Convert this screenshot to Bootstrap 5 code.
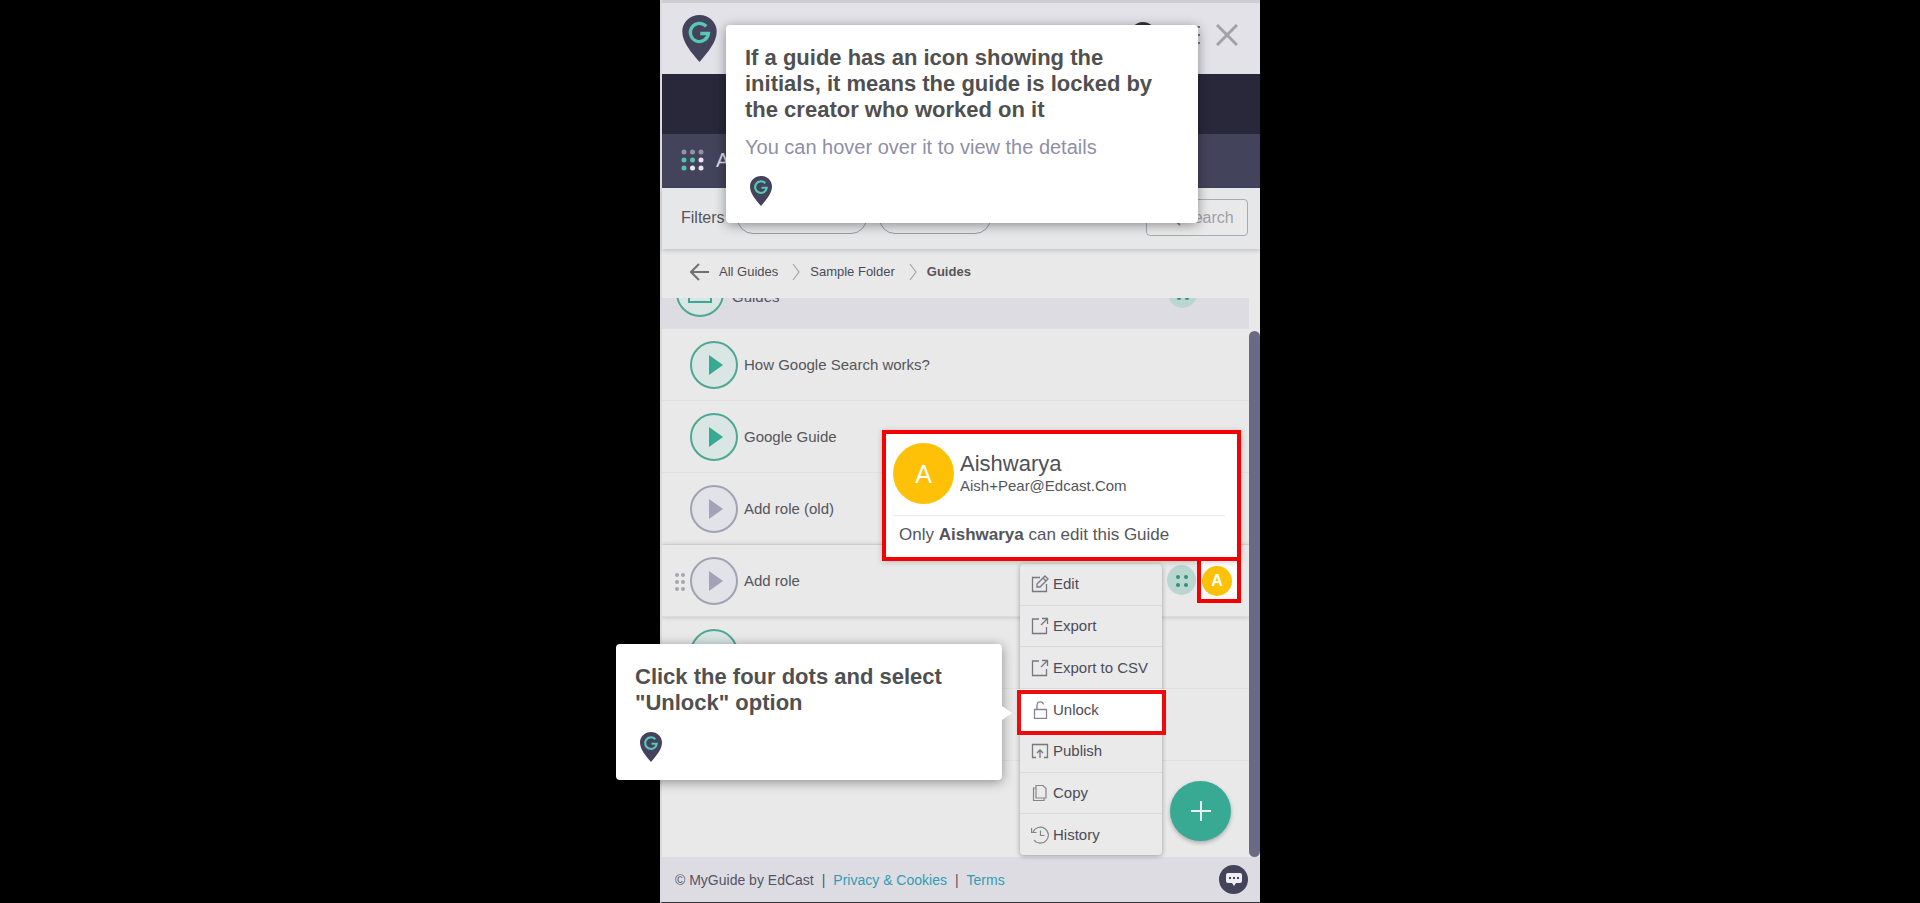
<!DOCTYPE html>
<html lang="en">
<head>
<meta charset="utf-8">
<meta name="viewport" content="width=device-width, initial-scale=1">
<title>MyGuide – unlock a guide</title>
<link href="https://cdn.jsdelivr.net/npm/bootstrap@5.3.0/dist/css/bootstrap.min.css" rel="stylesheet">
<style>
  body { background: #000; font-family: "Liberation Sans", Arial, sans-serif; font-size: 16px; line-height: 20px; color: #55555c; }
  button { font-family: inherit; color: inherit; }
  .panel { max-width: 600px; min-height: 100vh; background: #e9e9e9; border-left: 2px solid #dadada; border-bottom: 1px solid #33333b; }
  .top-bar { height: 74px; background: #e3e2e8; border-top: 3px solid #cdccd1; padding: 0 22px 0 20px; }
  .brand-band { height: 60px; background: #28283a; }
  .app-bar { height: 54px; background: #44435c; color: #dcdce4; padding: 0 0 2px 19px; }
  .filter-bar { height: 61px; background: #e6e7e9; padding: 0 12px 2px 19px; box-shadow: 0 2px 4px #00000026; z-index: 1; }
  .chip { height: 32px; border: 1px solid #9a9aa2; border-radius: 16px; background: transparent; font-size: 14px; color: #777; }
  .chip-a { width: 130px; } .chip-b { width: 112px; }
  .search-box { width: 102px; height: 37px; border: 1px solid #aaaab4; border-radius: 4px; background: #e9e9ea; padding: 0 6px 0 36px; font-size: 16px; }
  .search-box::placeholder { color: #9f9fa9; }
  .search-wrap svg { left: 18px; top: 10px; }
  .crumbs { height: 49px; padding: 0 0 3px 28px; font-size: 13px; line-height: 16px; gap: 10px; }
  .crumbs a { color: #4b4b57; text-decoration: none; }
  .list-area { overflow: hidden; padding-right: 11px; font-size: 15px; }
  .rows { margin: -41px 0 0; }
  .guide-row { height: 72px; border-bottom: 1px solid #e0e0e2; }
  .guide-row.folder { background: #dddce3; border: 0; padding-left: 14px; padding-right: 52px; }
  .guide-row.active { box-shadow: 0 0 5px #00000033; border-color: #dcdcdc; }
  .slot { width: 28px; padding-left: 13px; }
  .play { width: 48px; height: 48px; border: 2px solid #4fa893; border-radius: 50%; background: #d9e6e3; color: #38a993; margin-right: 6px; }
  .play.muted { border: 2px solid #a3a2b3; background: #e2e2e9; color: #a3a2b7; }
  .scroll-thumb { right: 0; top: 33px; bottom: 0; width: 11px; border-radius: 6px; background: #6b6a84; }
  .foot { height: 45px; background: #dddce3; padding: 0 12px 0 13px; font-size: 14px; color: #555463; }
  .foot a { color: #319db3; text-decoration: none; }
  .chat { width: 29px; height: 29px; border-radius: 50%; background: #44435c; }
  .overlay { position: absolute; z-index: 3; }
  .tip { background: #fff; border-radius: 4px; box-shadow: 0 2px 12px #00000066; padding: 20px 19px; z-index: 6; }
  .tip h2 { font-size: 22px; line-height: 26px; font-weight: 700; color: #505050; margin: 0; }
  .tip p { font-size: 20px; line-height: 24px; color: #8f8fa6; margin: 12px 0 17px; }
  .tip svg { margin-left: 5px; }
  .tip-a { left: 64px; top: 25px; width: 472px; height: 198px; }
  .tip-b { left: -46px; top: 644px; width: 386px; height: 136px; }
  .tip-b svg { margin-top: 16px; }
  .tip-b::after { content: ""; position: absolute; left: 100%; top: 62px; border: 7px solid transparent; border-left: 10px solid #fff; border-right: 0; }
  .dot-btn { width: 29px; height: 30px; border-radius: 50%; background: #b9d6cf; border: 0; padding: 0; color: #34907d; }
  .avatar { border-radius: 50%; background: #ffc107; color: #fff; }
  .owner { left: 220px; top: 430px; width: 359px; height: 131px; border: 4px solid #f40000; background: #fff; padding: 9px 12px 0 7px; z-index: 5; box-shadow: 0 1px 6px #00000033; }
  .owner .avatar { width: 61px; height: 61px; font-size: 25px; margin-right: 6px; }
  .owner h3 { font-size: 22px; line-height: 24px; margin: 0; font-weight: 400; color: #505055; }
  .owner hr { margin: 11px 0 9px; border-color: #aaa; }
  .owner-mail { font-size: 15px; }
  .owner-note { font-size: 17px; padding-left: 6px; }
  .more { left: 505px; top: 565px; }
  .owner-badge { left: 535px; top: 557px; width: 44px; height: 46px; border: 4px solid #f40000; background: #fff; z-index: 4; padding: 5px 0 0 1px; }
  .owner-badge .avatar { width: 30px; height: 30px; font-size: 16px; }
  .menu { left: 358px; top: 564px; width: 142px; height: 291px; background: #eaeaea; border-radius: 4px; box-shadow: 0 1px 5px #00000055; }
  .menu button { border: 0; border-bottom: 1px solid #dadada; background: transparent; padding: 0 0 0 11px; gap: 4px; min-height: 0; text-align: left; color: #4c4c58; font-size: 15px; }
  .menu button:last-child { border: 0; }
  .menu .chosen { position: relative; z-index: 1; background: #fff; margin: 0 -4px 0 -3px; padding-left: 14px; border-color: #fff; }
  .menu .chosen::after { content: ""; position: absolute; inset: 1px 0 -5px; border: 4px solid #ee0b0b; }
  .fab { left: 508px; top: 781px; width: 61px; height: 60px; border: 0; border-radius: 50%; background: #38a993; box-shadow: 0 2px 4px #00000044; padding: 0; }
  .close-x { border: 0; background: transparent; padding: 0; color: #a2a2a8; line-height: 0; }
</style>
</head>
<body>
<svg width="0" height="0" class="position-absolute" aria-hidden="true">
  <symbol id="pin" viewBox="0 0 22 30">
    <path fill="#44435c" d="M11 0C5 0 0 4.600 0 10.500 0 17.500 6 24 11 30 16 24 22 17.500 22 10.500 22 4.600 17 0 11 0Z"/>
    <path fill="none" stroke="#57c7b6" stroke-width="2.100" d="M15.300 7.300A5.800 5.800 0 1 0 16.700 11.800H11.500"/>
  </symbol>
  <symbol id="tri" viewBox="0 0 14 20"><path fill="currentColor" d="M0 0 14 10 0 20Z"/></symbol>
  <symbol id="four" viewBox="0 0 12 12"><g fill="currentColor"><circle cx="2" cy="2" r="2"/><circle cx="10" cy="2" r="2"/><circle cx="2" cy="10" r="2"/><circle cx="10" cy="10" r="2"/></g></symbol>
  <symbol id="out" viewBox="0 0 18 18"><path fill="none" stroke="#77777f" stroke-width="1.300" d="M8 2H1.500V16.500H15.500V10M10 8 16.500 1.500M11 1.500H16.500V7"/></symbol>
  <symbol id="chev" viewBox="0 0 8 18"><path fill="none" stroke="#a4a4aa" stroke-width="1.200" d="M1 1 7 9 1 17"/></symbol>
</svg>

<main class="panel position-relative d-flex flex-column mx-auto">
  <header class="top-bar d-flex align-items-center justify-content-between">
    <svg width="35" height="47"><use href="#pin"/></svg>
    <span class="d-flex align-items-center mb-2">
      <svg width="70" height="26" class="me-3" aria-hidden="true"><circle cx="13" cy="13" r="13" fill="#333340"/><path stroke="#77777f" stroke-width="2" d="M52 5h18M52 13h18M52 21h18"/></svg>
      <button class="close-x" aria-label="Close"><svg width="22" height="22" viewBox="0 0 22 22"><path stroke="currentColor" stroke-width="3" d="M1 1 21 21M21 1 1 21"/></svg></button>
    </span>
  </header>
  <div class="brand-band"></div>
  <nav class="app-bar d-flex align-items-center">
    <svg width="23" height="22" viewBox="0 0 23 22"><g fill="#9392a6"><circle cx="3" cy="3" r="2.500"/><circle cx="11.500" cy="3" r="2.500"/><circle cx="20" cy="3" r="2.500"/></g><g fill="#52c3b0"><circle cx="3" cy="11" r="2.500"/><circle cx="11.500" cy="11" r="2.500"/><circle cx="3" cy="19" r="2.500"/></g><g fill="#e8e8f0"><circle cx="20" cy="11" r="2.500"/><circle cx="11.500" cy="19" r="2.500"/><circle cx="20" cy="19" r="2.500"/></g></svg>
    <span class="ms-2 ps-1 fs-5">A</span>
  </nav>
  <div class="filter-bar d-flex align-items-center">
    <span class="me-2">Filters</span>
    <button class="chip chip-a ms-1 me-2" aria-label="Stage"></button>
    <button class="chip chip-b ms-1" aria-label="Owner"></button>
    <label class="search-wrap position-relative ms-auto"><svg class="position-absolute" width="18" height="18" viewBox="0 0 18 18" fill="none" stroke="#85858f" stroke-width="2"><circle cx="7" cy="7" r="5"/><path d="m11 11 5 5"/></svg><input class="search-box" type="text" placeholder="Search" aria-label="Search"></label>
  </div>
  <nav class="crumbs d-flex align-items-center" aria-label="Breadcrumb">
    <svg width="19" height="18" viewBox="0 0 19 18" fill="none" stroke="#707077" stroke-width="2"><path d="M9 1 1 9 9 17M1 9H19"/></svg>
    <a href="#" class="me-1">All Guides</a>
    <svg width="8" height="18"><use href="#chev"/></svg>
    <a href="#" class="me-1">Sample Folder</a>
    <svg width="8" height="18"><use href="#chev"/></svg>
    <strong>Guides</strong>
  </nav>

  <section class="list-area position-relative flex-grow-1">
    <div class="rows">
      <div class="guide-row folder d-flex align-items-center">
        <span class="play d-flex align-items-center justify-content-center me-2"><svg width="24" height="20" viewBox="0 0 24 20" fill="none" stroke="currentColor" stroke-width="2"><path d="M1 1H9L12 4H23V19H1Z"/></svg></span><span class="pt-2">Guides</span>
        <button class="dot-btn ms-auto" aria-label="Folder options"><svg width="12" height="12"><use href="#four"/></svg></button>
      </div>
      <div class="guide-row d-flex align-items-center"><span class="slot"></span><span class="play d-flex align-items-center justify-content-center"><svg width="14" height="20" class="ms-1"><use href="#tri"/></svg></span>How Google Search works?</div>
      <div class="guide-row d-flex align-items-center"><span class="slot"></span><span class="play d-flex align-items-center justify-content-center"><svg width="14" height="20" class="ms-1"><use href="#tri"/></svg></span>Google Guide</div>
      <div class="guide-row d-flex align-items-center"><span class="slot"></span><span class="play muted d-flex align-items-center justify-content-center"><svg width="14" height="20" class="ms-1"><use href="#tri"/></svg></span>Add role (old)</div>
      <div class="guide-row active d-flex align-items-center"><span class="slot"><svg width="10" height="18" viewBox="0 0 10 18" fill="#a5a5ac"><circle cx="2" cy="2" r="2"/><circle cx="8" cy="2" r="2"/><circle cx="2" cy="9" r="2"/><circle cx="8" cy="9" r="2"/><circle cx="2" cy="16" r="2"/><circle cx="8" cy="16" r="2"/></svg></span><span class="play muted d-flex align-items-center justify-content-center"><svg width="14" height="20" class="ms-1"><use href="#tri"/></svg></span>Add role</div>
      <div class="guide-row d-flex align-items-center"><span class="slot"></span><span class="play d-flex align-items-center justify-content-center"></span></div>
      <div class="guide-row"></div>
    </div>
    <div class="scroll-thumb position-absolute"></div>
  </section>

  <footer class="foot d-flex align-items-center">
    <span>© MyGuide by EdCast</span><span class="mx-2">|</span><a href="#">Privacy &amp; Cookies</a><span class="mx-2">|</span><a href="#">Terms</a>
    <span class="chat ms-auto d-flex align-items-center justify-content-center"><svg width="16" height="14" viewBox="0 0 16 14"><path fill="#eeeef2" d="M2 0H14Q16 0 16 2V8Q16 10 14 10H10L8 13 6 10H2Q0 10 0 8V2Q0 0 2 0Z"/><path fill="#44435c" d="M3 4h2v2H3zM7 4h2v2H7zM11 4h2v2h-2z"/></svg></span>
  </footer>

  <div class="overlay owner">
    <div class="d-flex align-items-center">
      <span class="avatar d-flex align-items-center justify-content-center">A</span>
      <div><h3>Aishwarya</h3><div class="owner-mail">Aish+Pear@Edcast.Com</div></div>
    </div>
    <hr>
    <div class="owner-note">Only <strong>Aishwarya</strong> can edit this Guide</div>
  </div>
  <button class="overlay dot-btn more" aria-label="Guide options"><svg width="12" height="12"><use href="#four"/></svg></button>
  <div class="overlay owner-badge"><span class="avatar d-flex align-items-center justify-content-center fw-bold">A</span></div>

  <div class="overlay menu d-flex flex-column">
    <button class="d-flex align-items-center flex-fill"><svg width="18" height="18" viewBox="0 0 18 18" fill="none" stroke="#77777f" stroke-width="1.300"><path d="M9 2.500H1.500V16.500H15.500V9M6 12V9L14 1 17 4 9 12ZM12 3 15 6"/></svg>Edit</button>
    <button class="d-flex align-items-center flex-fill"><svg width="18" height="18"><use href="#out"/></svg>Export</button>
    <button class="d-flex align-items-center flex-fill"><svg width="18" height="18"><use href="#out"/></svg>Export to CSV</button>
    <button class="chosen d-flex align-items-center flex-fill"><svg width="18" height="18" viewBox="0 0 18 18" fill="none" stroke="#85858c" stroke-width="1.300"><path d="M3.500 8.500H15.500V17.300H3.500ZM6 8.500V4.500Q6 .800 9.500 .800 12 .800 12.500 3.500"/></svg>Unlock</button>
    <button class="d-flex align-items-center flex-fill"><svg width="18" height="18" viewBox="0 0 18 18" fill="none" stroke="#77777f" stroke-width="1.300"><path d="M5 15.500H1.500V2.500H16.500V15.500H13M9 16V8M6 11 9 8 12 11"/></svg>Publish</button>
    <button class="d-flex align-items-center flex-fill"><svg width="18" height="18" viewBox="0 0 18 18" fill="none" stroke="#85858c" stroke-width="1.200"><path d="M5 1.500H12L15 4.500V14H5ZM5 4H2.500V16.500H13V14"/></svg>Copy</button>
    <button class="d-flex align-items-center flex-fill"><svg width="18" height="18" viewBox="0 0 18 18" fill="none" stroke="#85858c" stroke-width="1.200"><path d="M2 6A8 8 0 1 1 3 14M.600 2V6.500H5.500M9.500 4.500V9.500H13.500"/></svg>History</button>
  </div>

  <button class="overlay fab" aria-label="Add guide"><svg width="20" height="20" viewBox="0 0 20 20"><path stroke="#e4f2ef" stroke-width="2" d="M10 0V20M0 10H20"/></svg></button>

  <aside class="overlay tip tip-a">
    <h2>If a guide has an icon showing the initials, it means the guide is locked by the creator who worked on it</h2>
    <p>You can hover over it to view the details</p>
    <svg width="22" height="30"><use href="#pin"/></svg>
  </aside>
  <aside class="overlay tip tip-b">
    <h2>Click the four dots and select "Unlock" option</h2>
    <svg width="22" height="30"><use href="#pin"/></svg>
  </aside>
</main>
<script src="https://cdn.jsdelivr.net/npm/bootstrap@5.3.0/dist/js/bootstrap.bundle.min.js"></script>
</body>
</html>
